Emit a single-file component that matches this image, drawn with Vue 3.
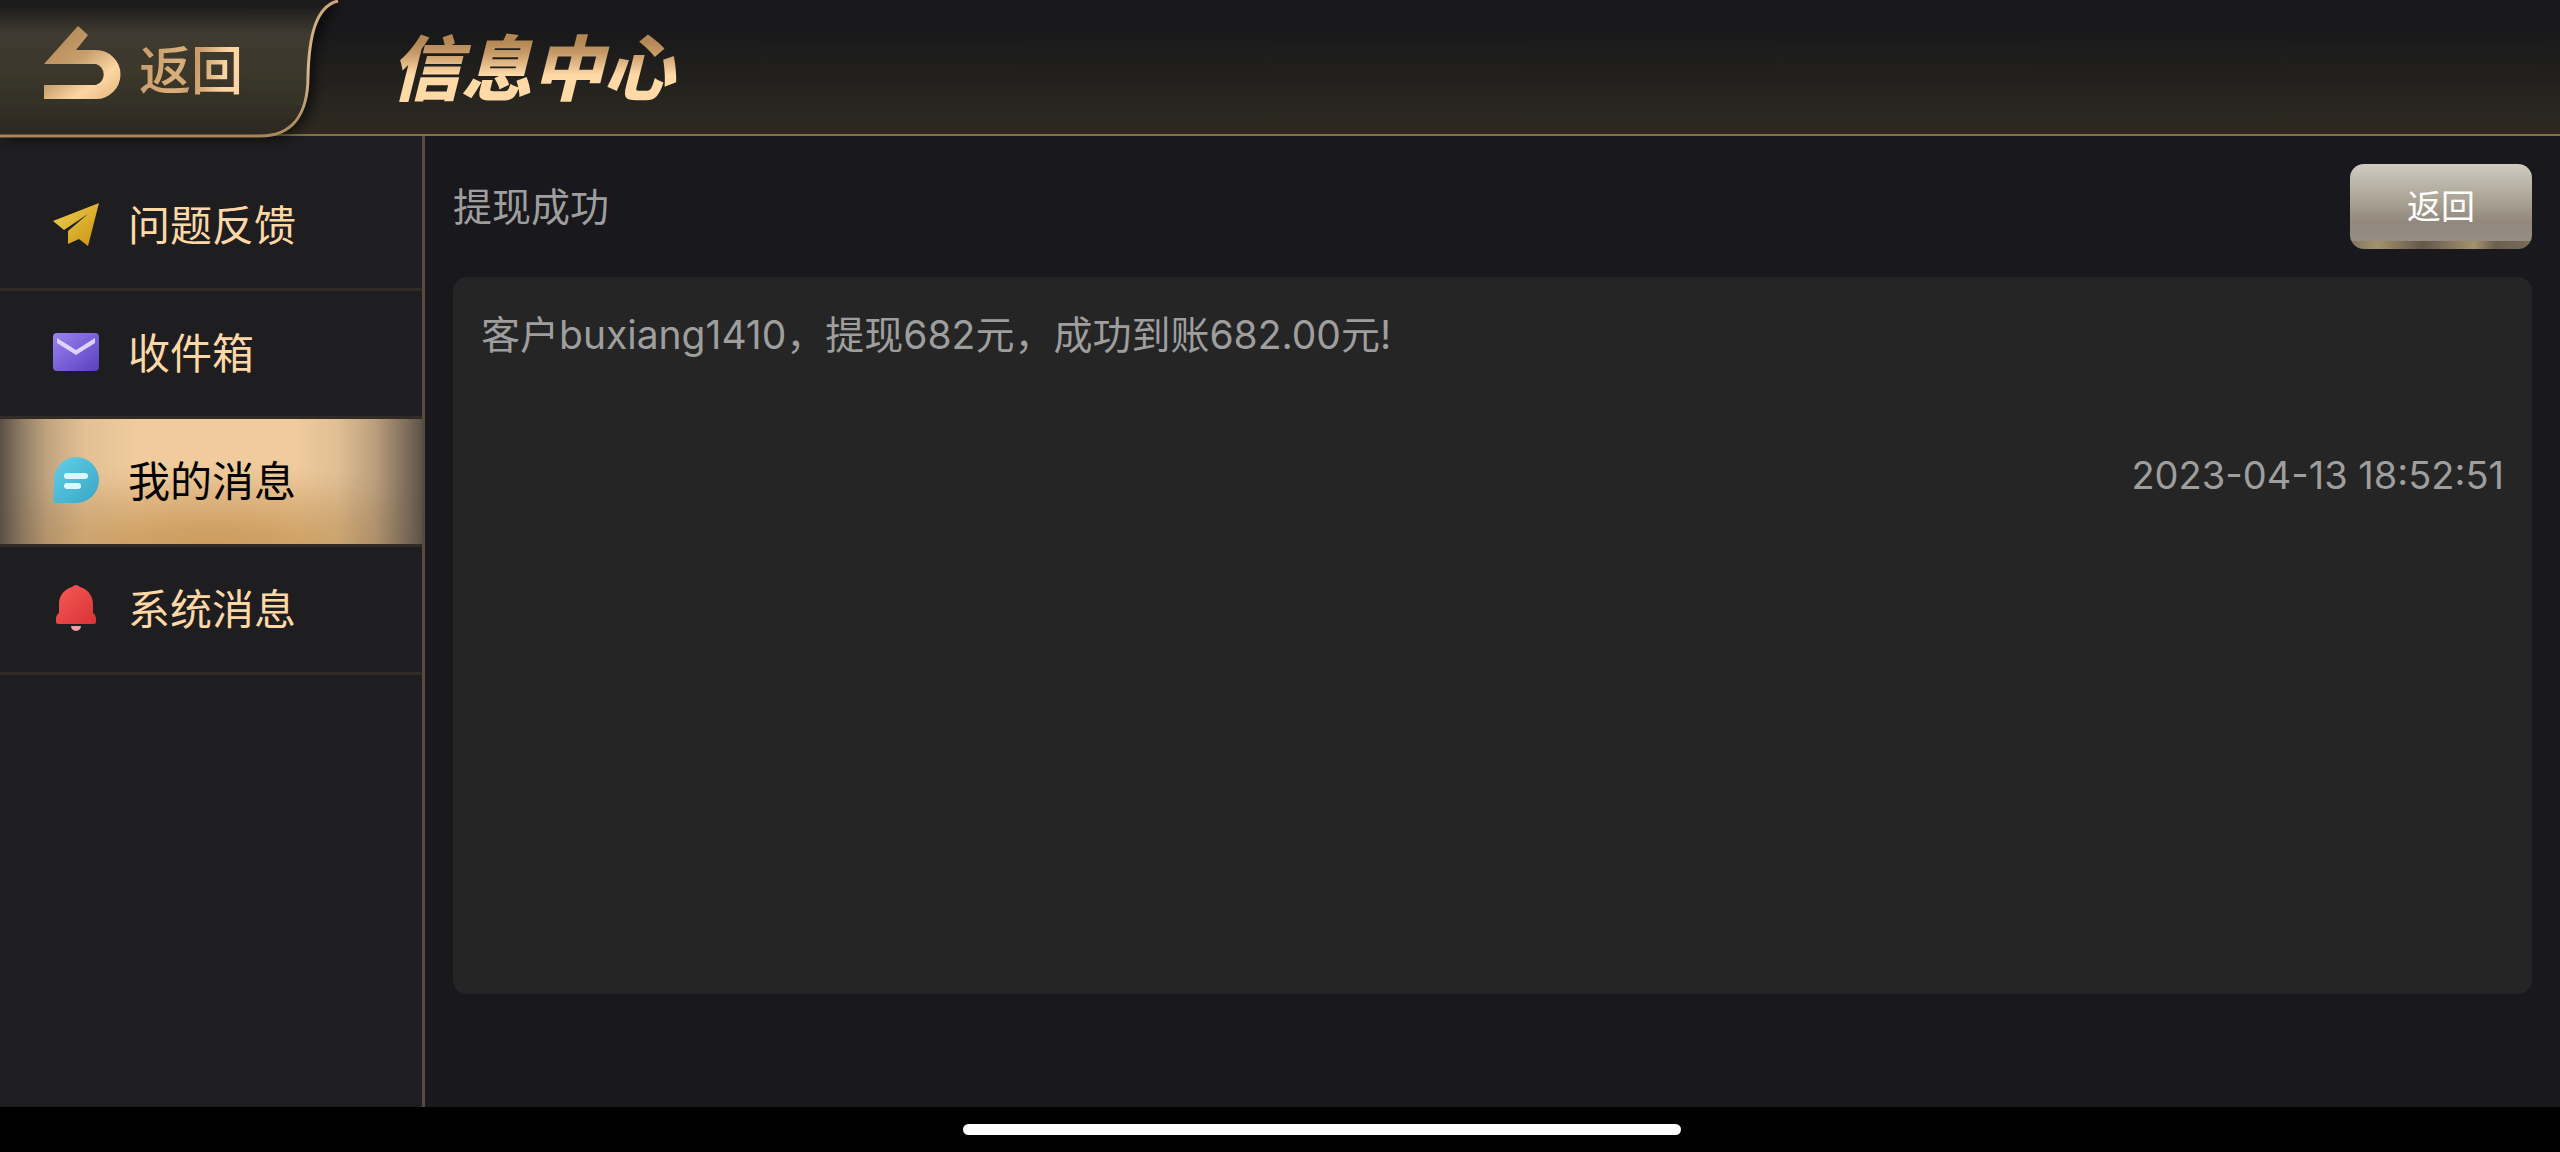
<script setup>
  import { ref } from 'vue';

  const menuArr = ref([
    { id: 0, name: '问题反馈', icon: 'plane' },
    { id: 1, name: '收件箱', icon: 'mail' },
    { id: 2, name: '我的消息', icon: 'chat' },
    { id: 3, name: '系统消息', icon: 'bell' },
  ]);
  const activeId = ref(2);

  const message = ref({
    title: '提现成功',
    content: '客户buxiang1410，提现682元，成功到账682.00元!',
    time: '2023-04-13 18:52:51',
  });

  const selectMenu = (id) => {
    activeId.value = id;
  }
</script>

<template>
  <div class="page">
    <header class="header">
      <button class="back-tab">
        <svg class="tab-shape" viewBox="0 0 360 150" aria-hidden="true">
          <defs>
            <linearGradient id="tabFill" x1="0" y1="0" x2="0" y2="1">
              <stop offset="0.03" stop-color="#1b1a1c" />
              <stop offset="0.25" stop-color="#403b30" />
              <stop offset="0.55" stop-color="#3b372c" />
              <stop offset="1" stop-color="#2b2820" />
            </linearGradient>
            <linearGradient id="tabLine" x1="0" y1="0" x2="0" y2="1">
              <stop offset="0" stop-color="#c9a77a" />
              <stop offset="0.5" stop-color="#d8b98e" />
              <stop offset="1" stop-color="#a98658" />
            </linearGradient>
            <filter id="tabShadow" x="-10%" y="-10%" width="130%" height="130%">
              <feDropShadow dx="6" dy="2" stdDeviation="7" flood-color="#000" flood-opacity="0.7" />
            </filter>
          </defs>
          <path d="M0 0H338C316 6 308 36 307 76C307 112 294 136 260 136H0Z" fill="url(#tabFill)" filter="url(#tabShadow)" />
          <path d="M338 1C316 6 309 36 308 76C308 112 294 136 260 136H0" fill="none" stroke="url(#tabLine)" stroke-width="3" />
        </svg>
        <svg class="back-icon" viewBox="0 0 78 76" aria-hidden="true">
          <defs>
            <linearGradient id="backFill" x1="0.1" y1="0" x2="0.9" y2="1">
              <stop offset="0.1" stop-color="#b48a58" />
              <stop offset="0.45" stop-color="#c89e6c" />
              <stop offset="0.75" stop-color="#fdd6a2" />
              <stop offset="1" stop-color="#e6bb84" />
            </linearGradient>
          </defs>
          <path d="M35 0L45 9L33 24H53A24 24 0 0 1 53 73H1V59H53A11 11 0 0 0 53 38H1Z" fill="url(#backFill)" />
        </svg>
        <span class="back-text">返回</span>
      </button>
      <!-- the trailing space keeps the slanted last glyph inside the gradient mask -->
      <h1 class="title">信息中心&nbsp;</h1>
    </header>

    <div class="body">
      <nav class="sidebar">
        <button
          v-for="item in menuArr"
          :key="item.id"
          class="menu-item"
          :class="{ active: item.id === activeId }"
          @click="selectMenu(item.id)"
        >
          <svg v-if="item.icon === 'plane'" class="menu-icon" viewBox="0 0 46 46" aria-hidden="true">
            <defs>
              <linearGradient id="planeFill" x1="0" y1="0" x2="1" y2="1">
                <stop offset="0" stop-color="#ecd257" />
                <stop offset="0.5" stop-color="#dcb230" />
                <stop offset="1" stop-color="#cb9213" />
              </linearGradient>
            </defs>
            <path d="M46 2L35 45L26 38L15 43V30L35 13L11 29L0 20Z" fill="url(#planeFill)" />
          </svg>
          <svg v-else-if="item.icon === 'mail'" class="menu-icon" viewBox="0 0 46 46" aria-hidden="true">
            <defs>
              <linearGradient id="mailFill" x1="0" y1="0" x2="1" y2="1">
                <stop offset="0" stop-color="#9b83f0" />
                <stop offset="1" stop-color="#5b3fc0" />
              </linearGradient>
            </defs>
            <rect x="0" y="4" width="46" height="38" rx="4" fill="url(#mailFill)" />
            <path d="M4 9L23 21L42 9V14L23 26L4 14Z" fill="#ddd3ff" />
          </svg>
          <svg v-else-if="item.icon === 'chat'" class="menu-icon" viewBox="0 0 46 46" aria-hidden="true">
            <defs>
              <linearGradient id="chatFill" x1="0" y1="0" x2="1" y2="1">
                <stop offset="0" stop-color="#63cfe8" />
                <stop offset="1" stop-color="#38a6c4" />
              </linearGradient>
            </defs>
            <path d="M23 0A23 23 0 0 1 23 46H2Q0 46 0 44L1 30V23A23 23 0 0 1 23 0Z" fill="url(#chatFill)" />
            <rect x="11" y="16" width="24" height="6" rx="3" fill="#d9f8ff" />
            <rect x="11" y="26" width="17" height="6" rx="3" fill="#d9f8ff" />
          </svg>
          <svg v-else class="menu-icon" viewBox="0 0 46 46" aria-hidden="true">
            <defs>
              <linearGradient id="bellFill" x1="0" y1="0" x2="1" y2="1">
                <stop offset="0" stop-color="#f55a58" />
                <stop offset="1" stop-color="#d93236" />
              </linearGradient>
            </defs>
            <path d="M18 41H28A5 5 0 0 1 18 41Z" fill="#f0a0a4" />
            <path d="M19 2Q23 -2 27 2C35 4 40 11 40 19V28Q43 30 43 34V37Q43 39 41 39H5Q3 39 3 37V34Q3 30 6 28V19C6 11 11 4 19 2Z" fill="url(#bellFill)" />
          </svg>
          <span>{{ item.name }}</span>
        </button>
      </nav>

      <main class="main">
        <div class="message-heading">
          <h2>{{ message.title }}</h2>
          <button class="return-button">返回</button>
        </div>
        <article class="message-card">
          <p>{{ message.content }}</p>
          <time>{{ message.time }}</time>
        </article>
      </main>
    </div>

    <footer class="footer">
      <div class="home-bar"></div>
    </footer>
  </div>
</template>

<style>
  body {
    background: #000;
  }
</style>

<style scoped>
  .page {
    display: flex;
    flex-direction: column;
    min-height: 100vh;
    font-family: Inter, "Noto Sans CJK SC", sans-serif;
    background: #19181c;
  }

  button {
    border: none;
    padding: 0;
    background: none;
    font-family: inherit;
    cursor: pointer;
  }

  .header {
    display: flex;
    align-items: center;
    height: 134px;
    border-bottom: 2px solid #86704b;
    background: linear-gradient(#19191b 25%, #28261f 80%, #2e2820);
  }

  .back-tab {
    position: relative;
    display: flex;
    align-items: center;
    gap: 18px;
    width: 340px;
    height: 134px;
    padding-left: 43px;
    padding-bottom: 6px;
    box-sizing: border-box;
  }

  .tab-shape {
    position: absolute;
    top: 0;
    left: 0;
    width: 360px;
    height: 150px;
  }

  .back-icon {
    position: relative;
    width: 78px;
    height: 76px;
  }

  .back-text {
    position: relative;
    font-size: 52px;
    font-weight: 500;
    line-height: 64px;
    padding-top: 16px;
    background: linear-gradient(100deg, #c39a68, #d9b07c 40%, #c79c68 55%, #fbd5a2 80%);
    background-clip: text;
    color: transparent;
  }

  .title {
    margin: 0 0 0 36px;
    padding: 4px 0 0 14px;
    font-size: 71px;
    font-weight: 900;
    font-style: italic;
    line-height: 96px;
    background: linear-gradient(#b48855 24%, #c69a67 36%, #ffd9a6 58%);
    background-clip: text;
    color: transparent;
  }

  .body {
    flex: 1;
    display: flex;
  }

  .sidebar {
    flex: none;
    width: 422px;
    padding-top: 27px;
    border-right: 3px solid #574b3e;
    background: #1e1e20;
  }

  .menu-item {
    display: flex;
    align-items: center;
    gap: 29px;
    width: 100%;
    height: 128px;
    padding-left: 53px;
    border-bottom: 3px solid #302b26;
    color: #fdd8a6;
    font-size: 42px;
    line-height: 60px;
  }

  .menu-item.active {
    color: #000;
    background:
      linear-gradient(90deg, #5a5048 0%, rgba(100, 88, 76, 0.7) 5%, rgba(120, 104, 84, 0.4) 11%, rgba(150, 126, 98, 0.14) 20%, transparent 32%, transparent 70%, rgba(150, 126, 98, 0.16) 80%, rgba(120, 104, 84, 0.45) 89%, rgba(100, 88, 76, 0.8) 96%, #5e5349 100%),
      radial-gradient(ellipse 70% 68% at 50% 106%, #cb9b5c 0%, #d0a266 30%, rgba(215, 172, 118, 0.7) 65%, rgba(225, 186, 138, 0.35) 90%, transparent 105%),
      #efcb9d;
  }

  .menu-icon {
    width: 46px;
    height: 46px;
    margin-bottom: 4px;
  }

  .main {
    flex: 1;
    display: flex;
    flex-direction: column;
    gap: 28px;
    padding: 28px 28px 113px;
    color: #9e9e9e;
  }

  .message-heading {
    display: flex;
    align-items: center;
    justify-content: space-between;
  }

  h2 {
    margin: 0;
    font-size: 39px;
    font-weight: 400;
    line-height: 60px;
  }

  .return-button {
    width: 182px;
    height: 85px;
    border-radius: 14px;
    color: #fff;
    font-size: 34px;
    line-height: 48px;
    background:
      linear-gradient(#d0cbc1, #aca596 45%, #92887d 75%, #968d82) top / 100% 77px no-repeat,
      linear-gradient(90deg, #81745c, #a3926f 15%, #63574a 40%, #a3926f 68%, #6b5f50 80%, #7a6c57);
  }

  .message-card {
    flex: 1;
    padding: 28px;
    border-radius: 14px;
    background: #252525;
    font-size: 39px;
    line-height: 60px;
  }

  .message-card p {
    margin: 0 0 80px;
  }

  .message-card time {
    display: block;
    font-size: 38px;
    text-align: right;
  }

  .footer {
    display: flex;
    justify-content: center;
    padding: 17px 0 17px 84px;
    background: #000;
  }

  .home-bar {
    width: 29%;
    height: 11px;
    border-radius: 6px;
    background: #fff;
  }
</style>
